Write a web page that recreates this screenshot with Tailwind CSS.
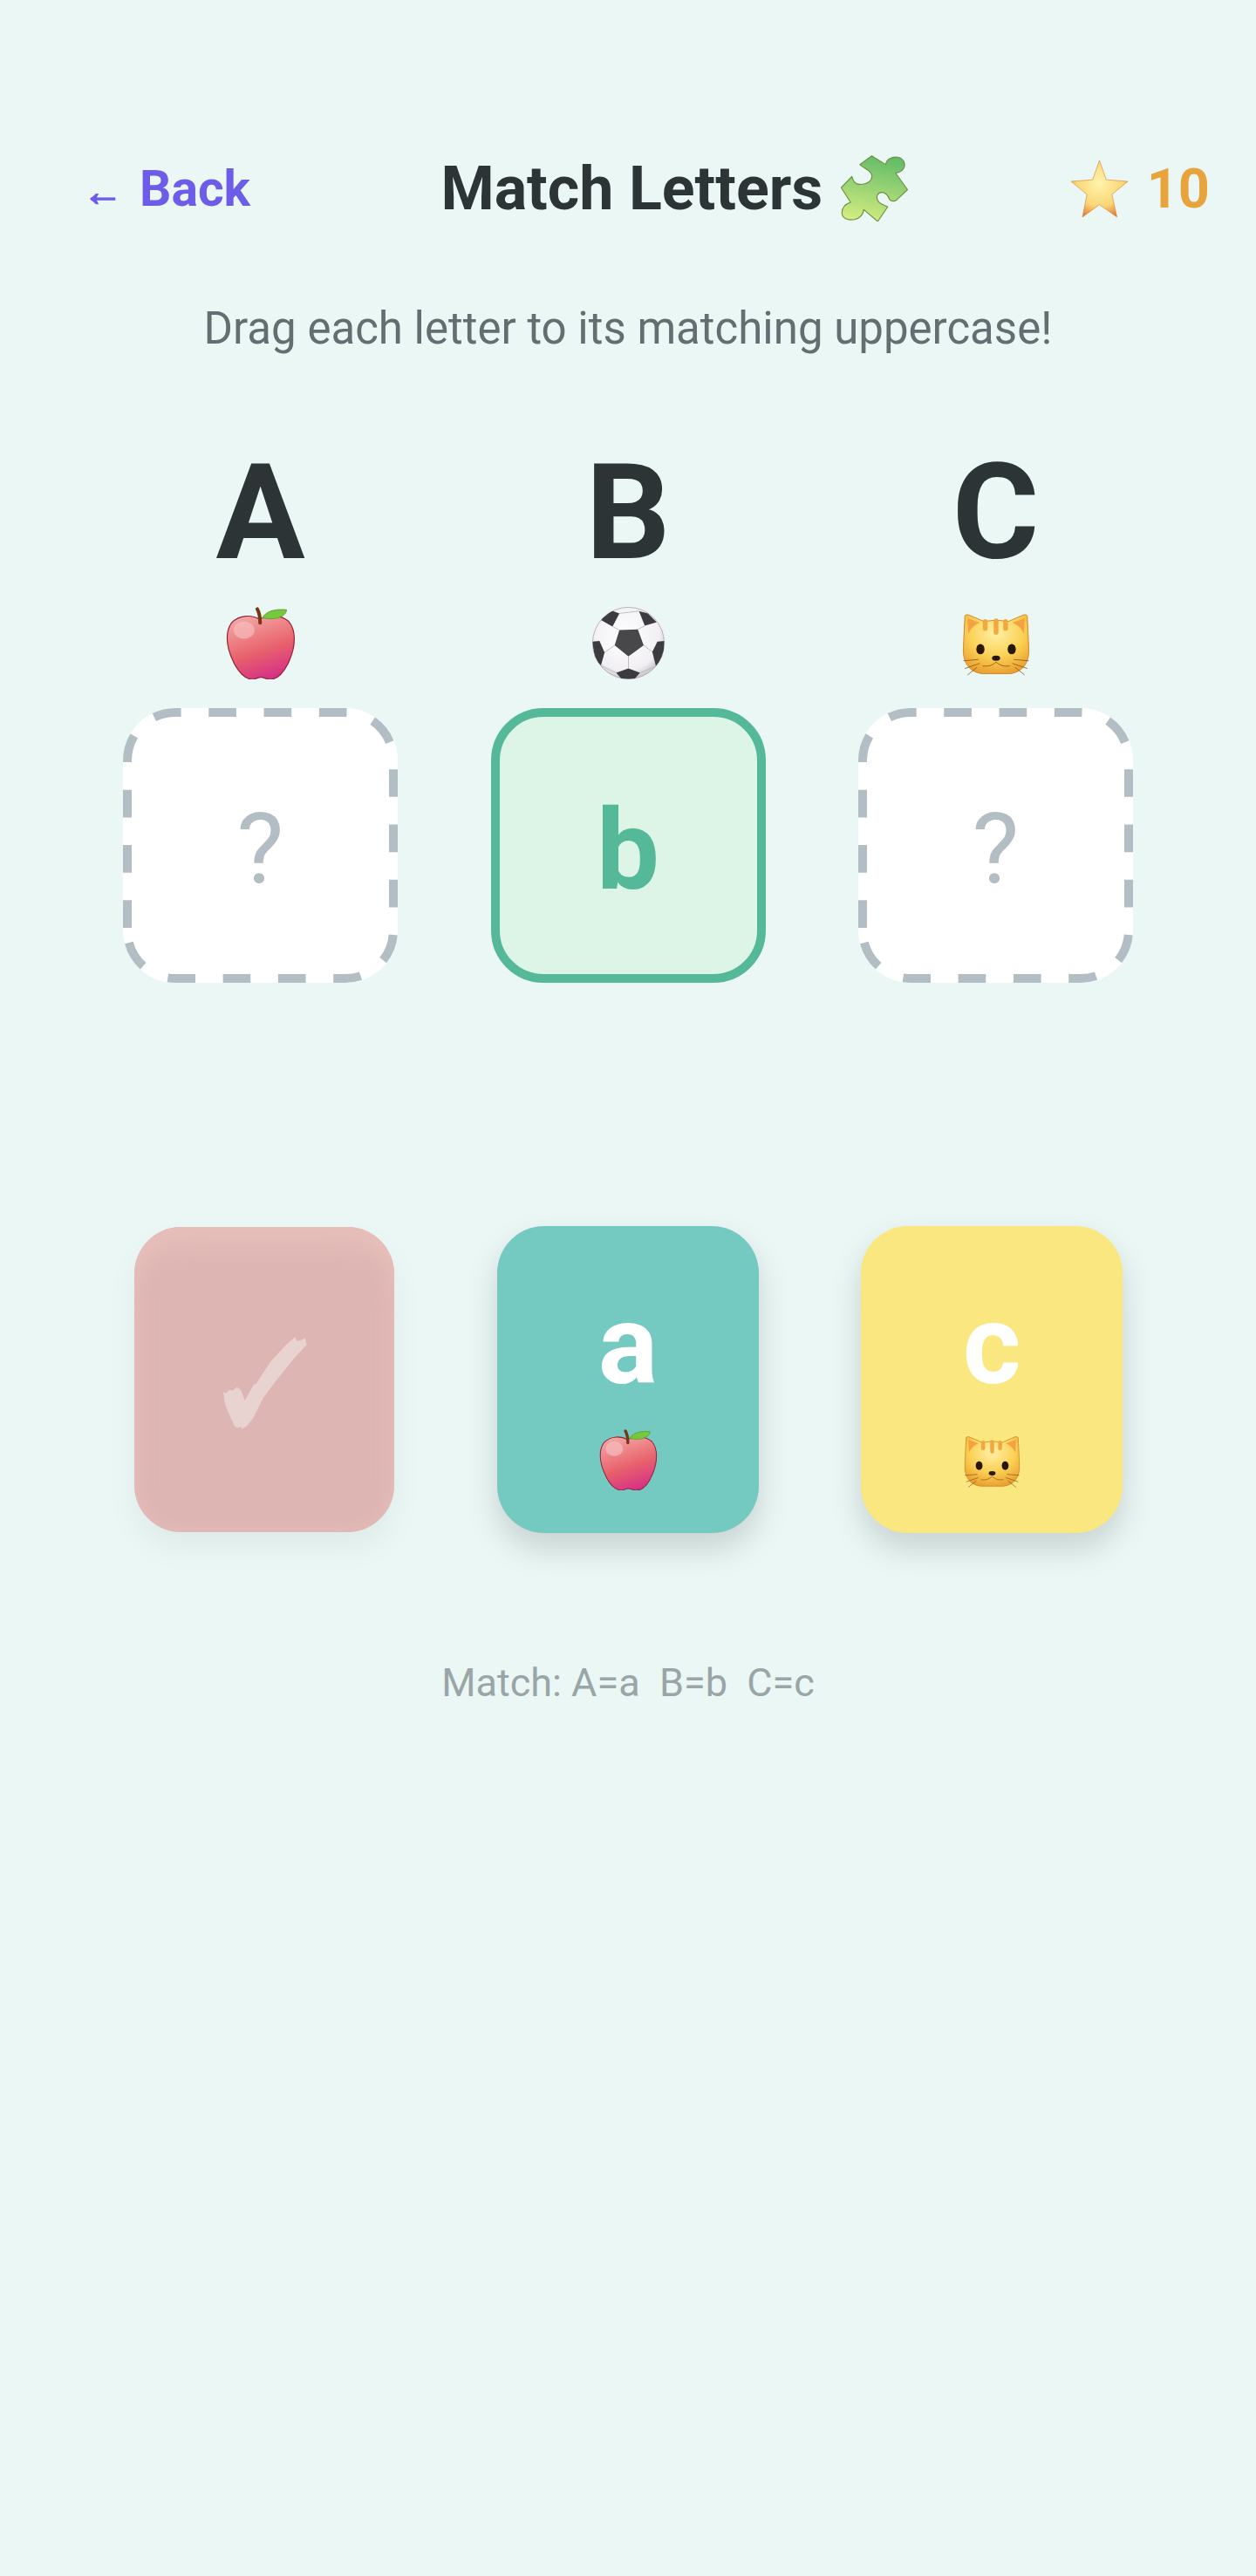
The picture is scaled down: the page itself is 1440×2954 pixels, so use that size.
<!DOCTYPE html>
<html lang="en">

<head>
    <meta charset="UTF-8">
    <meta name="viewport" content="width=device-width, initial-scale=1.0">
    <title>Match Letters</title>
    <script src="https://cdn.jsdelivr.net/npm/@tailwindcss/browser@4"></script>
</head>

<body class="bg-[#eaf7f5] font-[Roboto,sans-serif]">
    <!-- shared emoji drawings -->
    <svg class="absolute w-0 h-0">
        <defs>
            <linearGradient id="appleFill" x1="0.3" y1="0" x2="0.65" y2="1">
                <stop offset="0" stop-color="#f2a6a4" />
                <stop offset="0.55" stop-color="#e8626c" />
                <stop offset="1" stop-color="#d62f86" />
            </linearGradient>
            <radialGradient id="catFill" cx="0.5" cy="0.3" r="0.75">
                <stop offset="0" stop-color="#fff0a8" />
                <stop offset="0.55" stop-color="#fbd155" />
                <stop offset="1" stop-color="#e99a2c" />
            </radialGradient>
            <radialGradient id="ballFill" cx="0.45" cy="0.4" r="0.65">
                <stop offset="0" stop-color="#ffffff" />
                <stop offset="0.75" stop-color="#f1eff3" />
                <stop offset="1" stop-color="#b9b6c0" />
            </radialGradient>
            <linearGradient id="puzzleFill" x1="0.6" y1="0" x2="0.4" y2="1">
                <stop offset="0" stop-color="#63bb68" />
                <stop offset="1" stop-color="#d2ec80" />
            </linearGradient>
            <radialGradient id="starFill" cx="0.5" cy="0.4" r="0.66">
                <stop offset="0" stop-color="#fff4ad" />
                <stop offset="0.62" stop-color="#fbd675" />
                <stop offset="1" stop-color="#de7333" />
            </radialGradient>
            <clipPath id="ballClip">
                <circle cx="50" cy="50" r="49.5" />
            </clipPath>
            <symbol id="apple" viewBox="0 0 100 100" preserveAspectRatio="none">
                <path d="M48 17C38 11 20 10 8 22C-1 34 0 54 10 74C17 90 28 100 38 100C43 100 46 97 50 97C54 97 58 100 64 100C74 100 84 90 91 74C100 54 101 32 90 20C78 10 60 11 48 17Z" fill="url(#appleFill)" stroke="#94243a" stroke-width="1.5" />
                <ellipse cx="26" cy="32" rx="15" ry="12" fill="#f7bcbc" opacity="0.7" />
                <path d="M49 22C49 14 48 8 45 3" fill="none" stroke="#7a3514" stroke-width="5" stroke-linecap="round" />
                <path d="M52 15C60 3 76 3 87 4C86 14 70 19 52 15Z" fill="#76c83e" stroke="#4d9a26" stroke-width="1" />
            </symbol>
            <symbol id="cat" viewBox="0 0 100 100" preserveAspectRatio="none">
                <path d="M4 8Q3 1 10 3L32 13Q50 9 68 13L90 3Q97 1 96 8L98 52C100 78 88 92 70 94L30 94C12 92 0 78 2 52Z" fill="url(#catFill)" stroke="#c9851f" stroke-width="1.2" />
                <path d="M8 8L26 15Q14 20 9 32Z" fill="#f3a23f" />
                <path d="M92 8L74 15Q86 20 91 32Z" fill="#f3a23f" />
                <path d="M34 13V24M50 12V30M64 13V24" stroke="#f0a83f" stroke-width="7" stroke-linecap="round" fill="none" />
                <ellipse cx="27" cy="56" rx="6" ry="8" fill="#2a1708" />
                <ellipse cx="73" cy="56" rx="6" ry="8" fill="#2a1708" />
                <ellipse cx="50" cy="70" rx="6" ry="4" fill="#2a1708" />
                <path d="M2 74L24 72M4 86L26 78M8 96L22 84M98 74L76 72M96 86L74 78M92 96L78 84M30 82Q42 84 50 76Q58 84 70 82" stroke="#7d5214" stroke-width="1" fill="none" />
            </symbol>
        </defs>
    </svg>

    <main class="h-[2954px] pt-[176px]">
        <header class="flex items-center justify-between h-[80px] pl-[95px] pr-[53px]">
            <a class="flex items-center w-[226px] shrink-0 text-[#6c5ce7] text-[57px] font-bold leading-none">
                <span class="w-[65px] pt-[8px] text-[46px] [-webkit-text-stroke:1.5px_#6c5ce7] font-['Liberation_Sans']">←</span>
                <span>Back</span>
            </a>
            <h1 class="flex items-center gap-[21px] text-[#2d3436] text-[70px] font-bold leading-none">
                Match Letters
                <svg class="w-[77px] h-[76px]" viewBox="0 0 100 100">
                    <path d="M46 1L67 14C68 6 76 2 85 3C94 4 98 14 94 20C91 25 87 26 82 27L100 52L84 67C80 70 76 70 73 67C71 62 68 56 61 56C55 56 52 62 55 68C58 74 65 75 70 78L55 100L34 82C33 90 28 95 20 97C10 99 1 95 1 87C1 78 8 73 14 71L0 49L16 32C18 38 20 44 28 44C38 45 48 38 46 30C45 23 34 20 28 14Z" fill="url(#puzzleFill)" stroke="#6f8f3f" stroke-width="1.5" stroke-linejoin="round" />
                </svg>
            </h1>
            <div class="flex items-center gap-[20px] text-[#e8a33d] text-[63px] font-bold leading-none">
                <svg class="w-[69px] h-[65px]" viewBox="0 0 100 100">
                    <path d="M50 0L62 34L100 37L72 60L81 100L50 78L20 100L28 60L0 37L38 34Z" fill="url(#starFill)" stroke="#d68a3a" stroke-width="1" stroke-linejoin="round" />
                </svg>
                <span>10</span>
            </div>
        </header>

        <p class="mt-[91px] text-center text-[#636e72] text-[51px] leading-[60px]">Drag each letter to its matching uppercase!</p>

        <section class="mt-[91px] flex justify-center gap-[106.5px]">
            <div class="w-[315px] flex flex-col items-center">
                <div class="text-[#2d3436] text-[152px] font-bold leading-[180px]">A</div>
                <svg class="mt-[18px] w-[80px] h-[83px]"><use href="#apple" /></svg>
                <div class="relative mt-[33px] w-[315px] h-[315px] bg-white rounded-[60px] flex items-center justify-center pt-[6px] text-[#b2bec3] text-[114px] leading-none">
                    ?
                    <svg class="absolute inset-0" width="315" height="315" fill="none">
                        <path d="M5 252V60A55 55 0 0 1 60 5H255A55 55 0 0 1 310 60V255A55 55 0 0 1 255 310H60A55 55 0 0 1 5 255Z" stroke="#b2bec3" stroke-width="10" stroke-dasharray="31.65 31.65" />
                    </svg>
                </div>
            </div>
            <div class="w-[315px] flex flex-col items-center">
                <div class="text-[#2d3436] text-[152px] font-bold leading-[180px]">B</div>
                <svg class="mt-[18px] w-[83px] h-[83px]" viewBox="0 0 100 100">
                    <circle cx="50" cy="50" r="49.5" fill="url(#ballFill)" stroke="#a9a6ae" />
                    <g clip-path="url(#ballClip)" fill="#3c3c40">
                        <path d="M37.5 32L63 31L71 53L50 68.5L31 53Z" fill="#48484b" />
                        <path d="M10 17L24 4L37.5 9L28 27Z" />
                        <path d="M64.5 5.6L77 9L89 21L72.6 26Z" />
                        <path d="M0 48L10 47L17 63L12 81L4 72Z" />
                        <path d="M100 47L90 48L83 62L88 82L98 70Z" />
                        <path d="M33 91L50 85L66 91L58 100L41 100Z" />
                    </g>
                    <path d="M37.5 32L28 27M63 31L72.6 26M71 53L83 62M31 53L17 63M50 68.5V85M37.5 9L64.5 5.6M12 81L33 91M88 82L66 91" stroke="#b5b3ba" stroke-width="1" fill="none" />
                </svg>
                <div class="mt-[33px] w-[315px] h-[315px] bg-[#dcf5e6] border-[10px] border-[#55b899] rounded-[60px] flex items-center justify-center pt-[10px] text-[#55b899] text-[128px] font-bold leading-none">b</div>
            </div>
            <div class="w-[315px] flex flex-col items-center">
                <div class="text-[#2d3436] text-[152px] font-bold leading-[180px]">C</div>
                <svg class="mt-[25px] w-[78px] h-[74px]"><use href="#cat" /></svg>
                <div class="relative mt-[35px] w-[315px] h-[315px] bg-white rounded-[60px] flex items-center justify-center pt-[6px] text-[#b2bec3] text-[114px] leading-none">
                    ?
                    <svg class="absolute inset-0" width="315" height="315" fill="none">
                        <path d="M5 252V60A55 55 0 0 1 60 5H255A55 55 0 0 1 310 60V255A55 55 0 0 1 255 310H60A55 55 0 0 1 5 255Z" stroke="#b2bec3" stroke-width="10" stroke-dasharray="31.65 31.65" />
                    </svg>
                </div>
            </div>
        </section>

        <section class="mt-[279px] flex justify-center gap-[117px]">
            <div class="mx-[1px] my-[1px] w-[298px] h-[350px] rounded-[54px] bg-[#ddb5b2] shadow-[inset_0_32px_36px_-12px_#e7bfbb,inset_0_0_24px_#e5bcb9,0_18px_36px_rgba(0,0,0,0.05)] flex items-center justify-center">
                <svg class="ml-[2px] mt-[7px] w-[98px] h-[108px]" viewBox="405 455 295 325">
                    <path d="M408 648L418 652L430 640L440 644L455 632L468 640L476 660L482 678L515 620L520 622L570 545L625 485L657 458L660 472L675 470L690 462L696 485L650 535L590 610L545 670L510 740L490 765L472 776L470 768L458 772L448 768L430 730L414 690Z" fill="#e9d3d0" />
                </svg>
            </div>
            <div class="w-[300px] h-[352px] rounded-[54px] bg-[#74c9c1] shadow-[0_18px_36px_rgba(0,0,0,0.15)] flex flex-col items-center pt-[72px]">
                <div class="text-white text-[128px] font-bold leading-[128px]">a</div>
                <svg class="mt-[33px] w-[67px] h-[70px]"><use href="#apple" /></svg>
            </div>
            <div class="w-[300px] h-[352px] rounded-[54px] bg-[#fbe77f] shadow-[0_18px_36px_rgba(0,0,0,0.15)] flex flex-col items-center pt-[72px]">
                <div class="text-white text-[128px] font-bold leading-[128px]">c</div>
                <svg class="mt-[40px] w-[65px] h-[62px]"><use href="#cat" /></svg>
            </div>
        </section>

        <p class="mt-[147px] text-center text-[#9aa5a7] text-[45px] leading-[50px] whitespace-pre">Match: A=a  B=b  C=c</p>
    </main>
</body>

</html>
